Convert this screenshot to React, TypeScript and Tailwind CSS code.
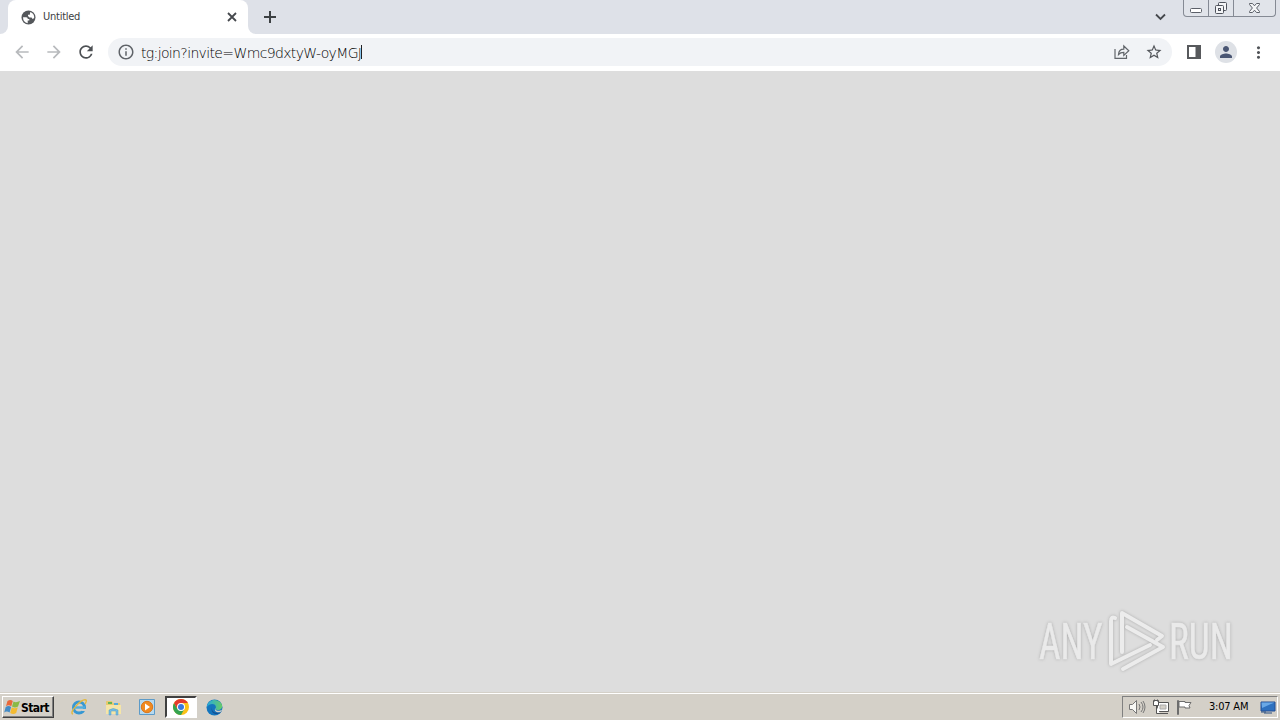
import React from "react";
import { MdArrowBack, MdArrowForward, MdRefresh, MdOutlineInfo, MdStarBorder, MdPerson, MdMoreVert } from "react-icons/md";

function WindowControls() {
  return (
    <div className="flex h-[17px] w-[93px] rounded-b-[4px] border border-t-0 border-[#858a94] bg-[#e1e4ea]">
      <div className="flex w-[25px] items-center justify-center border-r border-[#858a94]">
        <svg width="13" height="16" viewBox="0 0 13 16" fill="#fff" stroke="#5c6069"><rect x=".5" y="8.5" width="11" height="4" rx="1" /></svg>
      </div>
      <div className="flex w-[25px] items-center justify-center border-r border-[#858a94]">
        <svg width="14" height="16" viewBox="0 0 14 16" fill="#f4f5f7" stroke="#4f535c"><rect x="4.500" y="2.500" width="8" height="8" rx="1" /><rect x="1.500" y="5.500" width="8" height="8" rx="1" /><rect x="4.500" y="8.500" width="2" height="2" /></svg>
      </div>
      <div className="flex flex-1 items-center justify-center">
        <svg width="13" height="16" viewBox="0 0 13 16" fill="#f4f5f7" stroke="#5c6069"><path d="M1.500 3.500h3l2 2.300 2-2.300h3v1L8.600 8l2.900 3.500v1h-3l-2-2.300-2 2.300h-3v-1L4.400 8 1.500 4.500z" /></svg>
      </div>
    </div>
  );
}

function TabStrip() {
  return (
    <div className="flex h-[34px] shrink-0 bg-[#dee1e8]">
      <div className="w-2 bg-white"><div className="h-full rounded-br-[8px] bg-[#dee1e8]" /></div>
      <div className="flex w-[240px] items-center rounded-t-[8px] bg-white pl-[13px] pr-[10px]">
        <svg width="15" height="15" viewBox="0 0 15 15"><circle cx="7.500" cy="7.500" r="7" fill="#54575b" /><path fill="#fff" d="M2 7.200h3.300q1.600.1 1.500 1.800h1.500v1.600H6.700v2.600Q2.100 12.400 2 7.200zM9.300 2.100q4.200 1.500 3.900 6L11.700 9 10.500 7.500H8.400L7 6V4.800h1.700z" /></svg>
        <span className="ml-[7px] flex-1 pt-px text-[11px] tracking-[-0.25px] text-[#3c4043]">Untitled</span>
        <svg width="12" height="12" viewBox="0 0 12 12" stroke="#45484d" strokeWidth="1.800"><path d="M2 2l8 8M10 2l-8 8" /></svg>
      </div>
      <div className="w-2 bg-white"><div className="h-full rounded-bl-[8px] bg-[#dee1e8]" /></div>
      <div className="flex w-7 items-center justify-center">
        <svg width="12" height="12" viewBox="0 0 12 12" stroke="#3c4043" strokeWidth="2"><path d="M6 0v12M0 6h12" /></svg>
      </div>
      <div className="flex-1" />
      <svg className="mr-[17px] mt-[13px]" width="11" height="8" viewBox="0 0 11 8" fill="none" stroke="#45484d" strokeWidth="1.800"><path d="M1 1.500l4.500 4.500L10 1.500" /></svg>
      <WindowControls />
      <div className="w-1" />
    </div>
  );
}

function Toolbar() {
  return (
    <div className="flex h-[37px] shrink-0 items-center bg-white pb-px pl-3">
      <div className="flex gap-3 text-[#b8babd]">
        <MdArrowBack size={20} />
        <MdArrowForward size={20} />
        <MdRefresh size={20} className="text-[#4d5054]" />
      </div>
      <div className="ml-3 flex h-7 w-[1064px] items-center rounded-full bg-[#f1f3f6] pl-[9px] pr-[9px]">
        <MdOutlineInfo size={18} className="text-[#5f6368]" />
        <span className="ml-[6px] whitespace-pre pt-[2px] font-[family-name:'DejaVu_Sans',sans-serif] text-[14px] font-extralight tracking-[-0.64px] text-black">tg:join?invite=Wmc9dxtyW-oyMGJ</span>
        <span className="h-[14px] w-px bg-[#202124]" />
        <div className="flex-1" />
        <svg width="16" height="16" viewBox="0 0 16 16" fill="none" stroke="#62666b" strokeWidth="1.200"><path d="M1 5v9.400h11.500V11M4.500 10.500c.2-3.500 2.200-5.400 5.300-5.400V2l5 4.700-5 4.700V8.300c-2.300 0-4 .6-5.300 2.200z" /></svg>
        <MdStarBorder size={18} className="ml-[15px] text-[#53565b]" />
      </div>
      <svg className="ml-[15px]" width="14" height="14" viewBox="0 0 14 14"><path fill="#57595c" fillRule="evenodd" d="M0 0h14v14H0zM2 2v10h6.500V2z" /></svg>
      <div className="ml-[14px] flex size-[22px] items-center justify-center rounded-full bg-[#dee1e6]"><MdPerson size={18} className="text-[#4a5673]" /></div>
      <MdMoreVert size={19} className="ml-3 text-[#505357]" />
    </div>
  );
}

function Watermark() {
  return (
    <svg className="absolute right-[41px] bottom-[10px]" width="206" height="74" viewBox="0 0 206 74">
      <g style={{ filter: "drop-shadow(0 0 1.500px #aaa)" }}>
        <g fill="#eaeaea" stroke="#eaeaea" strokeWidth=".6" fontFamily="Roboto, sans-serif" fontSize="50">
          <text transform="translate(6 51) scale(.65 1)" textLength="98" lengthAdjust="spacingAndGlyphs">ANY</text>
          <text transform="translate(136 51) scale(.65 1)" textLength="98" lengthAdjust="spacingAndGlyphs">RUN</text>
        </g>
        <g fill="none" stroke="#ececec" strokeWidth="4" strokeLinecap="round" strokeLinejoin="round">
          <path d="M82 10q-4-2-4 3v43l39-19" />
          <path d="M89 44V5l40 23-5 4" />
          <path d="M90 61l40-22-36-20" />
        </g>
      </g>
    </svg>
  );
}

function StartLogo() {
  return <svg width="17" height="16" viewBox="0 0 17 16"><path fill="#e9683a" d="M3.500 2q3-2 5.300 0L7.300 7.300Q4.500 5.300 2 7.300z" /><path fill="#8ab946" d="M9.500 2.500Q12 4 16 2l-2 5.500q-3 2-6 0z" /><path fill="#438bc6" d="M1.700 8q3-2 5.400 0L5.600 13.500q-3-2-5.400 0z" /><path fill="#f3bb32" d="M7.800 8.300q3 2 6 0L12.200 14q-3 2-6 0z" /></svg>;
}

function QuickLaunch() {
  return (
    <div className="ml-[8px] flex h-[22px] items-center">
      <div className="flex w-[34px] justify-center">
        <svg width="18" height="18" viewBox="0 0 18 18" fill="none"><circle cx="9" cy="9.500" r="5.500" stroke="#3798d3" strokeWidth="3" /><path d="M5 9.500h10" stroke="#50aee0" strokeWidth="2.400" /><path d="M11.500 12h5" stroke="#d4d0c8" strokeWidth="2" /><path d="M3 16C-2 15 12 0 16 2q1 1-1 4" stroke="#e3b83f" strokeWidth="1.400" /></svg>
      </div>
      <div className="flex w-[34px] justify-center">
        <svg width="17" height="17" viewBox="0 0 17 17"><path d="M1 2h6l1 2h7v11H1z" fill="#e8ca6f" /><path d="M3 3h4v2H3z" fill="#63b557" /><path d="M9 4h4v2H9z" fill="#55a9dc" /><path d="M1 6h15v9H1z" fill="#f5e5a7" /><path d="M4 16v-5q4-3 9 0v5h-2v-4H6v4z" fill="#76bce2" stroke="#4e9fca" strokeWidth=".5" /></svg>
      </div>
      <div className="flex w-[34px] justify-center">
        <svg width="16" height="16" viewBox="0 0 16 16"><path d="M.5.5h15v15H.5z" fill="#b7d9ee" stroke="#5d9bc8" /><circle cx="8" cy="8" r="5.700" fill="#f18a20" stroke="#d9771c" /><path d="M6 4.500l5 3.500-5 3.500z" fill="#fff" /></svg>
      </div>
      <div className="ml-px flex h-[22px] w-[32px] items-center justify-center border-2 border-t-[#404040] border-r-white border-b-white border-l-[#404040] bg-white">
        <svg width="16" height="16" viewBox="0 0 16 16"><circle cx="8" cy="8" r="8" fill="#fbc116" /><path d="M1.070 4A8 8 0 0 0 8 16l3.400-6L8 8 4.500 10z" fill="#34a350" /><path d="M1.070 4L4.500 10 8 8V4h6.900A8 8 0 0 0 1.070 4z" fill="#e33b2e" /><circle cx="8" cy="8" r="4" fill="#fff" /><circle cx="8" cy="8" r="3" fill="#3979df" /></svg>
      </div>
      <div className="flex w-[35px] justify-center">
        <svg width="17" height="17" viewBox="0 0 17 17"><defs><linearGradient id="edge" x1="0" x2="1"><stop stopColor="#26aade" /><stop offset="1" stopColor="#67cb68" /></linearGradient></defs><circle cx="8.500" cy="8.500" r="8" fill="#1475bd" /><path d="M.8 8C2 .5 10-1 14.500 3.500c3.500 4 1 8-3 7.500-2 0-2.700-1-1.500-2.500C10 4 3.500 4 .8 8z" fill="url(#edge)" /><path d="M6 8c-1 5 4 7 9 5-4 4-11 2-9-5z" fill="#164e91" /><path d="M9.500 8.500c-1.500 3 3 4.500 7 2l-2 2.500c-4 1-7-1-5-4.500z" fill="#d4d0c8" /></svg>
      </div>
    </div>
  );
}

function Tray() {
  return (
    <div className="flex h-[22px] w-[156px] items-center border border-t-[#808080] border-r-white border-b-white border-l-[#808080] pl-[6px]">
      <svg width="17" height="16" viewBox="0 0 17 16" fill="#f8f8f5" stroke="#777"><path d="M.5 5.500h3l4-4v13l-4-4h-3z" /><path fill="none" d="M10 5q2 3 0 6M12 3q4 5 0 10M14 2q4 6 0 12" /></svg>
      <svg className="ml-[7px]" width="17" height="16" viewBox="0 0 17 16" fill="#fff" stroke="#555"><path d="M4.500 3.500h11v9h-11zM7 14.500h8" /><path d="M.5 1.500h5v5h-5zM1.500.5v2M4.500.5v2M3.500 7v7.500H7" /><path d="M7 6h6v4H7z" fill="#d4d0c8" stroke="#aaa" /></svg>
      <svg className="ml-[6px]" width="17" height="16" viewBox="0 0 17 16" fill="#fff" stroke="#6d6d6d"><path d="M1.500 15.500v-14h1v14z" /><path d="M3 2.500h6v1h6l-2 3 1 2.500H9v-1H3z" /></svg>
      <span className="ml-[16px] w-[42px] whitespace-nowrap pt-px text-[11px] tracking-[-0.2px] text-black">3:07 AM</span>
      <svg className="ml-[9px]" width="16" height="13" viewBox="0 0 16 13"><path d="M1 1h14v9H1z" fill="#2e71bf" stroke="#254f93" /><path d="M1.500 1.500h13L2 7z" fill="#69a8e6" /><path d="M4 12h8M1 11h5" stroke="#294c7e" /></svg>
    </div>
  );
}

export default function App() {
  return (
    <div className="flex h-[720px] w-[1280px] flex-col overflow-hidden bg-[#dddddd] font-[family-name:'DejaVu_Sans',sans-serif] [font-stretch:condensed]">
      <TabStrip />
      <Toolbar />
      <main className="relative flex-1 bg-[#dddddd]"><Watermark /></main>
      <footer className="flex h-[28px] shrink-0 items-center border-t border-[#d4d0c8] bg-[#d4d0c8] shadow-[inset_0_1px_0_#fff] pr-[2px] pl-[2px] pt-[1px]">
        <button className="flex h-[22px] w-[52px] items-center border border-t-white border-r-[#404040] border-b-[#404040] border-l-white pl-[1px] shadow-[inset_-1px_-1px_#808080]">
          <StartLogo /><span className="pt-px text-[12px] font-bold tracking-[-0.6px] text-black">Start</span>
        </button>
        <QuickLaunch />
        <div className="flex-1" />
        <Tray />
      </footer>
    </div>
  );
}
